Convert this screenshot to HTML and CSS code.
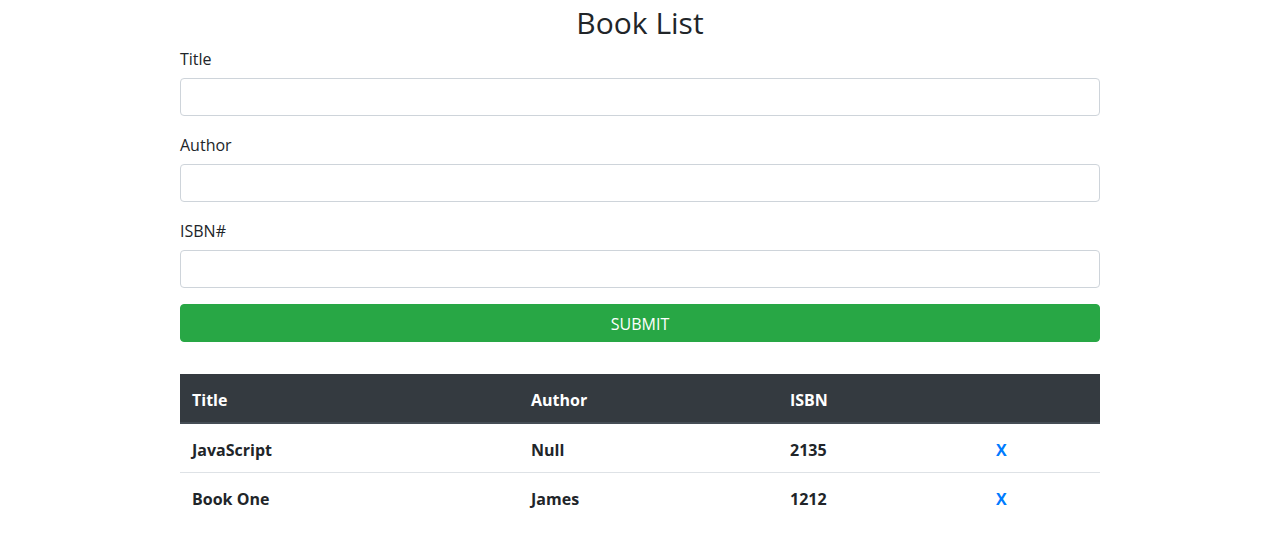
FILE: index.html
```html
<!DOCTYPE html>
<html lang="en">
<head>
<meta charset="utf-8">
<title>Book List</title>
<link rel="stylesheet" href="styles.css">
</head>
<body>
<div class="container">
  <h1 class="title">Book List</h1>
  <form class="book-form">
    <div class="form-group">
      <label for="title">Title</label>
      <input type="text" id="title" class="form-control">
    </div>
    <div class="form-group">
      <label for="author">Author</label>
      <input type="text" id="author" class="form-control">
    </div>
    <div class="form-group">
      <label for="isbn">ISBN#</label>
      <input type="text" id="isbn" class="form-control">
    </div>
    <button type="button" class="btn-submit">SUBMIT</button>
  </form>
  <table class="book-table">
    <colgroup>
      <col class="c-title"><col class="c-author"><col class="c-isbn"><col class="c-del">
    </colgroup>
    <thead>
      <tr><th>Title</th><th>Author</th><th>ISBN</th><th></th></tr>
    </thead>
    <tbody>
      <tr><td>JavaScript</td><td>Null</td><td>2135</td><td><a href="#" class="delete">X</a></td></tr>
      <tr><td>Book One</td><td>James</td><td>1212</td><td><a href="#" class="delete">X</a></td></tr>
    </tbody>
  </table>
</div>
</body>
</html>
```
FILE: styles.css
```css
* { box-sizing: border-box; }
body {
  margin: 0;
  font-family: "Open Sans", "Noto Sans", sans-serif;
  font-size: 16px;
  line-height: 1.5;
  color: #212529;
  background: #fff;
}
.container {
  width: 920px;
  margin: 0 auto;
}
.title {
  margin: 0 0 4px;
  padding-top: 4px;
  font-size: 30px;
  font-weight: 400;
  line-height: 38px;
  text-align: center;
}
.form-group { margin-bottom: 16px; }
.form-group label {
  display: block;
  padding-top: 1px;
  margin-bottom: 7px;
}
.form-control {
  display: block;
  width: 100%;
  height: 38px;
  padding: 6px 12px;
  font: inherit;
  border: 1px solid #ced4da;
  border-radius: 4px;
  background: #fff;
}
.btn-submit {
  display: block;
  width: 100%;
  height: 38px;
  padding: 7px 12px 5px;
  font: inherit;
  color: #fff;
  background: #28a745;
  border: 1px solid #28a745;
  border-radius: 4px;
}
.book-table {
  width: 100%;
  margin-top: 32px;
  border-collapse: collapse;
  font-weight: 700;
}
.c-title { width: 339px; }
.c-author { width: 259px; }
.c-isbn { width: 206px; }
.c-del { width: 116px; }
.book-table th, .book-table td {
  padding: 14px 12px 10px;
  text-align: left;
  vertical-align: top;
}
.book-table thead th {
  color: #fff;
  background: #343a40;
  border-bottom: 2px solid #454d55;
}
.book-table tbody td { border-top: 1px solid #dee2e6; }
.book-table tbody tr:first-child td { border-top: 0; }
.delete {
  color: #007bff;
  text-decoration: none;
}
```
